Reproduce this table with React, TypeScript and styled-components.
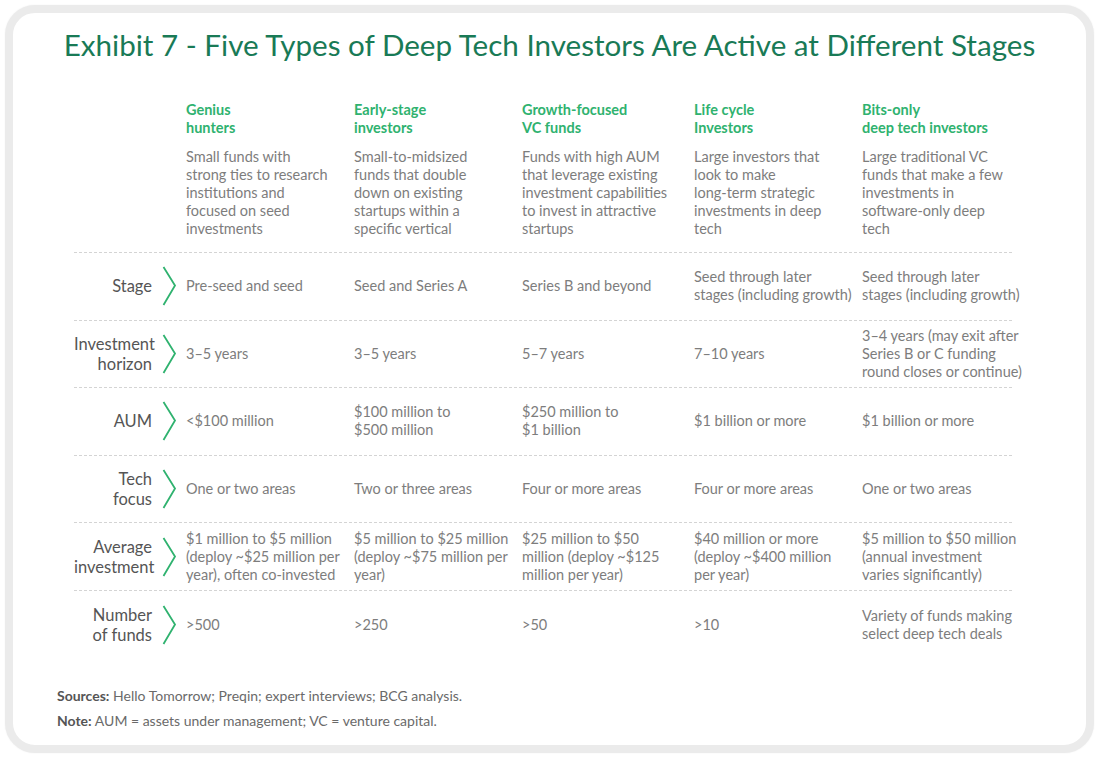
import React from "react";
import styled, { createGlobalStyle } from "styled-components";

const Global = createGlobalStyle`
  html, body { margin: 0; padding: 0; background: #ffffff; }
  body { font-family: Lato, "Liberation Sans", sans-serif; }
  * { box-sizing: border-box; }
`;

const Card = styled.div`
  margin: 5px;
  width: 1089px;
  height: 748px;
  border: 8px solid #ebebeb;
  border-radius: 30px;
  background: #ffffff;
  box-shadow: 0 0 2px rgba(0, 0, 0, 0.06);
  padding: 14px 0 0 0;
  display: flex;
  flex-direction: column;
`;

const Title = styled.h1`
  margin: 0;
  font-family: Lato, "Liberation Sans", sans-serif;
  font-weight: 400;
  font-size: 29.6px;
  line-height: 36px;
  color: #197a56;
  text-align: center;
`;

const Table = styled.div`
  margin: 38px 0 0 61px;
  width: 938px;
  display: flex;
  flex-direction: column;
`;

const Grid = styled.div<{ $header?: boolean; $last?: boolean }>`
  display: grid;
  grid-template-columns: 78px 34px 168px 168px 172px 168px 1fr;
  align-items: ${(p) => (p.$header ? "start" : "center")};
  height: ${(p) => (p.$header ? "auto" : "67.6px")};
  padding-bottom: ${(p) => (p.$header ? "14px" : "0")};
  border-bottom: ${(p) => (p.$last ? "none" : "1px dashed #d4d4d4")};
`;

const HeadCell = styled.div`
  display: flex;
  flex-direction: column;
`;

const HeadTitle = styled.div`
  font-family: Lato, "Liberation Sans", sans-serif;
  font-weight: 700;
  font-size: 14.5px;
  line-height: 18px;
  color: #2fb26f;
  margin-bottom: 11px;
  white-space: nowrap;
`;

const Lines = styled.div`
  font-family: Lato, "Liberation Sans", sans-serif;
  font-size: 14.5px;
  line-height: 18px;
  color: #7d7d7d;
  white-space: nowrap;
`;

const Label = styled.div`
  font-family: Lato, "Liberation Sans", sans-serif;
  font-size: 16.5px;
  line-height: 20px;
  color: #555555;
  text-align: right;
  white-space: nowrap;
`;

const ChevronBox = styled.div`
  display: flex;
  justify-content: center;
  align-items: center;
`;

const Footer = styled.div`
  margin: 24px 0 0 44px;
  font-family: Lato, "Liberation Sans", sans-serif;
  font-size: 14px;
  line-height: 25px;
  color: #6a6a6a;
`;

const Bold = styled.b`
  font-weight: 700;
  color: #555555;
`;

const Chevron = () => (
  <ChevronBox>
    <svg width="15" height="40" viewBox="0 0 15 40">
      <path d="M1.5 1 L13 19.5 L1.5 39" fill="none" stroke="#2fb26f" strokeWidth="1.8" strokeLinejoin="miter" />
    </svg>
  </ChevronBox>
);

const headers: { title: string[]; desc: string[] }[] = [
  {
    title: ["Genius", "hunters"],
    desc: ["Small funds with", "strong ties to research", "institutions and", "focused on seed", "investments"],
  },
  {
    title: ["Early-stage", "investors"],
    desc: ["Small-to-midsized", "funds that double", "down on existing", "startups within a", "specific vertical"],
  },
  {
    title: ["Growth-focused", "VC funds"],
    desc: ["Funds with high AUM", "that leverage existing", "investment capabilities", "to invest in attractive", "startups"],
  },
  {
    title: ["Life cycle", "Investors"],
    desc: ["Large investors that", "look to make", "long-term strategic", "investments in deep", "tech"],
  },
  {
    title: ["Bits-only", "deep tech investors"],
    desc: ["Large traditional VC", "funds that make a few", "investments in", "software-only deep", "tech"],
  },
];

const rows: { label: string[]; cells: string[][] }[] = [
  {
    label: ["Stage"],
    cells: [
      ["Pre-seed and seed"],
      ["Seed and Series A"],
      ["Series B and beyond"],
      ["Seed through later", "stages (including growth)"],
      ["Seed through later", "stages (including growth)"],
    ],
  },
  {
    label: ["Investment", "horizon"],
    cells: [
      ["3–5 years"],
      ["3–5 years"],
      ["5–7 years"],
      ["7–10 years"],
      ["3–4 years (may exit after", "Series B or C funding", "round closes or continue)"],
    ],
  },
  {
    label: ["AUM"],
    cells: [
      ["<$100 million"],
      ["$100 million to", "$500 million"],
      ["$250 million to", "$1 billion"],
      ["$1 billion or more"],
      ["$1 billion or more"],
    ],
  },
  {
    label: ["Tech", "focus"],
    cells: [
      ["One or two areas"],
      ["Two or three areas"],
      ["Four or more areas"],
      ["Four or more areas"],
      ["One or two areas"],
    ],
  },
  {
    label: ["Average", "investment"],
    cells: [
      ["$1 million to $5 million", "(deploy ~$25 million per", "year), often co-invested"],
      ["$5 million to $25 million", "(deploy ~$75 million per", "year)"],
      ["$25 million to $50", "million (deploy ~$125", "million per year)"],
      ["$40 million or more", "(deploy ~$400 million", "per year)"],
      ["$5 million to $50 million", "(annual investment", "varies significantly)"],
    ],
  },
  {
    label: ["Number", "of funds"],
    cells: [[">500"], [">250"], [">50"], [">10"], ["Variety of funds making", "select deep tech deals"]],
  },
];

const Multi = ({ lines }: { lines: string[] }) => (
  <>
    {lines.map((l, i) => (
      <React.Fragment key={i}>
        {l}
        {i < lines.length - 1 && <br />}
      </React.Fragment>
    ))}
  </>
);

export default function App() {
  return (
    <>
      <Global />
      <Card>
        <Title>Exhibit 7 - Five Types of Deep Tech Investors Are Active at Different Stages</Title>
        <Table>
          <Grid $header>
            <div />
            <div />
            {headers.map((h, i) => (
              <HeadCell key={i}>
                <HeadTitle>
                  <Multi lines={h.title} />
                </HeadTitle>
                <Lines>
                  <Multi lines={h.desc} />
                </Lines>
              </HeadCell>
            ))}
          </Grid>
          {rows.map((r, i) => (
            <Grid key={i} $last={i === rows.length - 1}>
              <Label>
                <Multi lines={r.label} />
              </Label>
              <Chevron />
              {r.cells.map((c, j) => (
                <Lines key={j}>
                  <Multi lines={c} />
                </Lines>
              ))}
            </Grid>
          ))}
        </Table>
        <Footer>
          <div>
            <Bold>Sources:</Bold> Hello Tomorrow; Preqin; expert interviews; BCG analysis.
          </div>
          <div>
            <Bold>Note:</Bold> AUM = assets under management; VC = venture capital.
          </div>
        </Footer>
      </Card>
    </>
  );
}
